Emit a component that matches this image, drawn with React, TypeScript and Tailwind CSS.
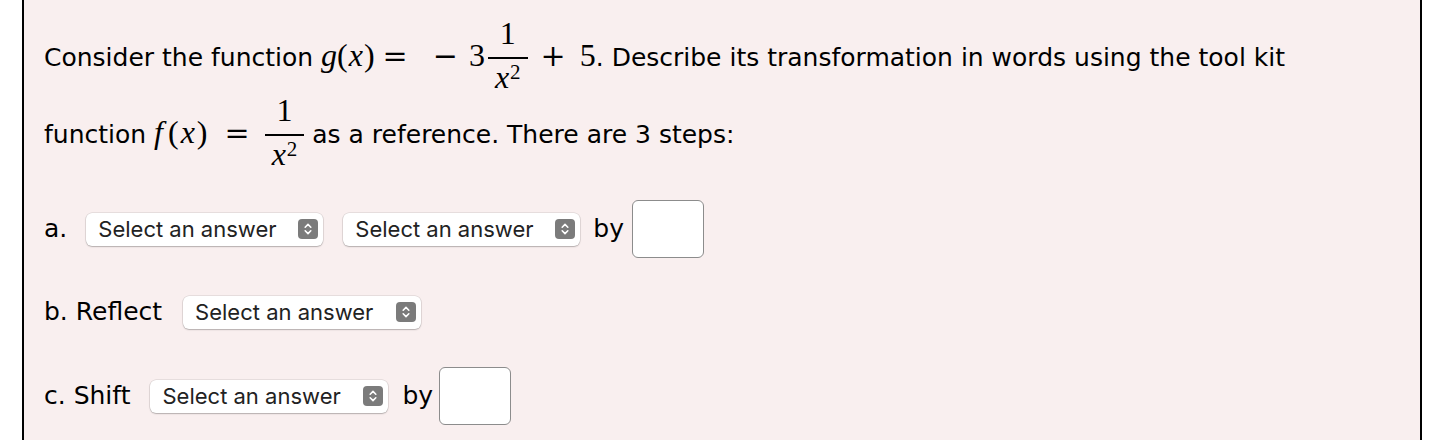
const SelectBox = ({ className = '' }: { className?: string }) => {
  return (
    <div
      className={`flex h-[33px] items-center justify-between rounded-[6px] bg-white pl-[12px] pr-[5px] shadow-[0_0_0_0.5px_rgba(0,0,0,0.14),0_1px_1.5px_rgba(0,0,0,0.22)] ${className}`}
    >
      <span className="font-['Inter',sans-serif] text-[22px] leading-none text-[#222]">
        Select an answer
      </span>
      <svg width="20" height="20" viewBox="0 0 20 20">
        <rect x="0" y="0" width="20" height="20" rx="4" fill="#7b7b7b" />
        <path d="M7.2 8.2 L10 5.4 L12.8 8.2" fill="none" stroke="#fff" strokeWidth="1.6" strokeLinecap="round" strokeLinejoin="round" />
        <path d="M7.2 11.8 L10 14.6 L12.8 11.8" fill="none" stroke="#fff" strokeWidth="1.6" strokeLinecap="round" strokeLinejoin="round" />
      </svg>
    </div>
  )
}

const AnswerBox = ({ className = '' }: { className?: string }) => (
  <div className={`h-[58px] w-[72px] rounded-[6px] border-[1.5px] border-[#8c8c8c] bg-white ${className}`} />
)

// display-style 1/x^2, baseline of numerator sits 22px over the text baseline
const Frac = ({ className = '' }: { className?: string }) => (
  <span className={`inline-flex flex-col items-center align-[22px] font-['Liberation_Serif',serif] ${className}`}>
    <span className="block pb-[8px] text-[32px] leading-[32px]">1</span>
    <span className="block h-[1.5px] w-full bg-black" />
    <span className="block px-[7px] pt-[2px] text-[32px] leading-[32px]">
      <span className="italic">x</span>
      <span className="ml-[1px] align-[9px] text-[21px] leading-[0px]">2</span>
    </span>
  </span>
)

const M = ({ children, className = '' }: { children: React.ReactNode; className?: string }) => (
  <span className={`font-['Liberation_Serif',serif] text-[32px] leading-[0px] ${className}`}>{children}</span>
)

// relations and operators are wider in the reference, DejaVu Serif is closer
const Op = ({ children, className = '' }: { children: React.ReactNode; className?: string }) => (
  <span className={`font-['DejaVu_Serif',serif] text-[30px] leading-[0px] ${className}`}>{children}</span>
)

export default function App() {
  return (
    <div className="h-[440px] overflow-hidden bg-white">
      <div className="ml-[22px] h-[440px] w-[1400px] border-x-2 border-black bg-[#f9efef] pl-[20px] pt-[17px] font-['DejaVu_Sans',sans-serif] text-[25px] text-black">
        <div className="whitespace-nowrap leading-[72px]">
          Consider the function{' '}
          <M className="italic">g</M>
          <M>(</M>
          <M className="mx-[1px] italic">x</M>
          <M>)</M>
          <Op className="ml-[8px]">=</Op>
          <Op className="ml-[25px]">−</Op>
          <M className="ml-[11px]">3</M>
          <Frac className="ml-[3px]" />
          <Op className="ml-[13px]">+</Op>
          <M className="ml-[14px]">5</M>. Describe its transformation in words using the tool kit
        </div>
        <div className="whitespace-nowrap leading-[72px]">
          function{' '}
          <M className="mr-[3px] italic">f</M>
          <M className="ml-[2px]">(</M>
          <M className="ml-[2px] italic">x</M>
          <M className="ml-[2px]">)</M>
          <Op className="ml-[17px]">=</Op>
          <Frac className="ml-[15px]" /> as a reference. There are 3 steps:
        </div>

        <div className="mt-[29px] flex h-[58px] items-center">
          <span>a.</span>
          <SelectBox className="ml-[19px] w-[237px]" />
          <SelectBox className="ml-[20px] w-[237px]" />
          <span className="ml-[13px]">by</span>
          <AnswerBox className="ml-[8px]" />
        </div>

        <div className="mt-[25px] flex h-[58px] items-center">
          <span>b. Reflect</span>
          <SelectBox className="ml-[21px] w-[238px]" />
        </div>

        <div className="mt-[26px] flex h-[58px] items-center">
          <span>c. Shift</span>
          <SelectBox className="ml-[20px] w-[238px]" />
          <span className="ml-[14px]">by</span>
          <AnswerBox className="ml-[6px]" />
        </div>
      </div>
    </div>
  )
}
